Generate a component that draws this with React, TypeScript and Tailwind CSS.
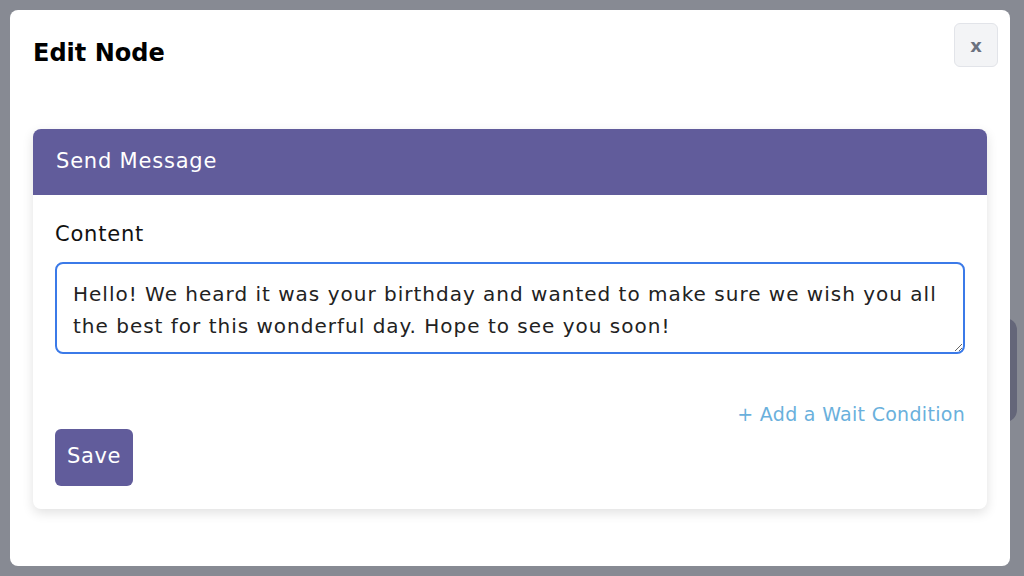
import React, { useEffect, useRef } from "react";

const MESSAGE =
  "Hello! We heard it was your birthday and wanted to make sure we wish you all the best for this wonderful day. Hope to see you soon!";

export default function App() {
  const areaRef = useRef<HTMLTextAreaElement>(null);

  // put the caret at the end of the message
  useEffect(() => {
    const el = areaRef.current;
    if (el) {
      el.focus();
      el.setSelectionRange(MESSAGE.length, MESSAGE.length);
    }
  }, []);

  return (
    <div className="relative w-full h-[576px] overflow-hidden bg-[#878a93] p-[10px] font-['DejaVu_Sans',sans-serif]">
      {/* page element peeking out behind the overlay */}
      <div className="absolute right-[7px] top-[318px] h-[104px] w-[20px] rounded-r-xl bg-[#646679]" />

      <div className="relative flex h-full w-[1000px] flex-col rounded-lg bg-white px-[23px]">
        <div className="flex items-start justify-between pt-[13px]">
          <h1 className="pt-[18px] text-[24px] font-bold leading-none text-black">Edit Node</h1>
          <button className="mr-[-11px] flex h-[44px] w-[44px] items-center justify-center rounded-md border border-[#e2e4e9] bg-[#f3f4f6] text-[18px] font-bold text-[#6b7280]">
            x
          </button>
        </div>

        <div className="mt-[62px] overflow-hidden rounded-lg bg-white shadow-[0_4px_12px_rgba(0,0,0,0.12)]">
          <div className="flex h-[66px] items-center bg-[#615c9b] px-[23px] text-[21px] tracking-[0.8px] text-white">
            Send Message
          </div>
          <div className="px-[22px] pb-[23px] pt-[26px]">
            <label className="block text-[21px] leading-[26px] tracking-[0.8px] text-[#111]">Content</label>
            <textarea
              ref={areaRef}
              defaultValue={MESSAGE}
              rows={2}
              className="mt-[15px] block h-[92px] w-full resize-y rounded-lg border-2 border-[#3b7ae8] px-[16px] py-[14px] text-[20px] leading-[32px] tracking-[1px] text-[#222] outline-none"
            />
            <div className="mt-[46px] flex justify-end">
              <span className="text-[19px] tracking-[0.3px] text-[#6ab0dc]">+ Add a Wait Condition</span>
            </div>
            <button className="mt-0 flex h-[57px] items-center rounded-md bg-[#615c9b] px-[12px] text-[21px] tracking-[0.6px] text-white">
              Save
            </button>
          </div>
        </div>
      </div>
    </div>
  );
}
